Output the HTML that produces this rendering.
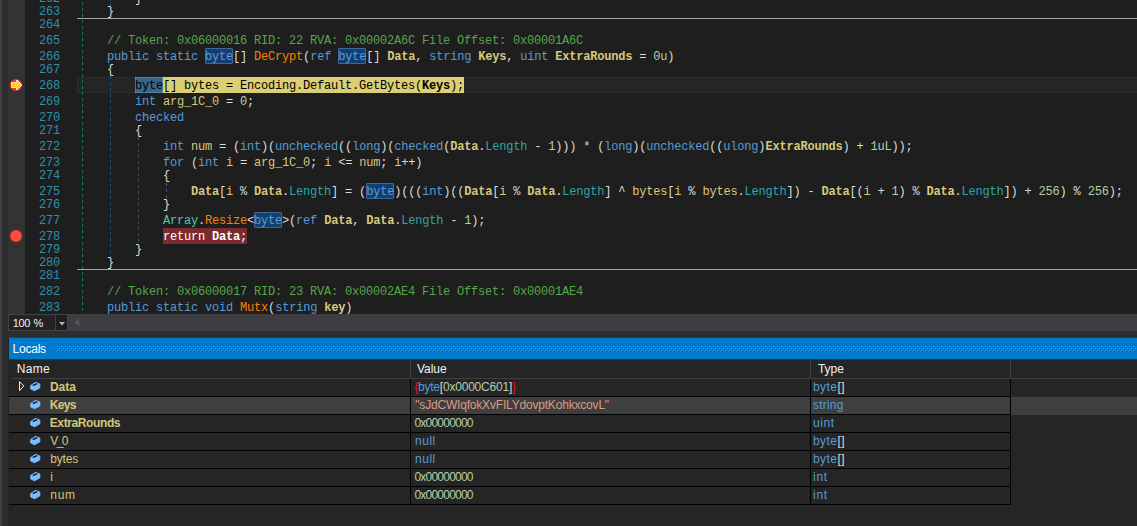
<!DOCTYPE html>
<html lang="en">
<head>
<meta charset="utf-8">
<title>dnSpy - DeCrypt</title>
<style>
html,body{margin:0;padding:0;}
body{width:1137px;height:526px;overflow:hidden;background:#2d2d30;position:relative;font-family:"Liberation Sans",sans-serif;}
#edge{position:absolute;left:0;top:0;width:2px;height:526px;background:#3f3f46;}
#gm{position:absolute;left:8px;top:0;width:17px;height:314px;background:#333333;}
#ed{position:absolute;left:25px;top:0;width:1112px;height:314px;background:#1e1e1e;overflow:hidden;}
#code{position:absolute;left:-25px;top:0;width:1137px;height:314px;font-family:"Liberation Mono", "DejaVu Sans Mono", monospace;font-size:12px;letter-spacing:-0.2px;color:#dcdcdc;white-space:pre;}
.ln{position:absolute;left:32px;width:28px;height:16px;line-height:16px;text-align:right;color:#2b91af;}
.cl{position:absolute;height:16px;line-height:16px;}
.k{color:#569cd6}.c{color:#57a64a}.n{color:#b5cea8}.m{color:#ff8000}.p{color:#d8c87c;font-weight:bold}.l{color:#d8c87c}.t{color:#4ec9b0}.r{color:#2ba7a7}
.cur{color:#000}.cur b{font-weight:bold}.bp{color:#fff}
.bx{position:absolute;height:16px;box-sizing:border-box;}
.bx.hb{background:#133e70;border:1px solid #3f6896;border-radius:1px;}
.bx.hb2{background:#3a6587;border:1px solid #4f7ea8;border-radius:1px;}
.bx.cur{background:#dccf73;}
.bx.bp{background:#7b2a2d;}
.sep{position:absolute;left:77px;right:0;height:1px;background:#a8a8a8;}
.row{position:absolute;left:9px;width:1001px;height:17px;border-bottom:1px solid #000;border-right:1px solid #000;font-size:12px;line-height:17px;color:#dcdcdc;white-space:pre;}
.row .d1,.row .d2{position:absolute;top:0;width:1px;height:17px;background:#000}
.row .d1{left:401px}.row .d2{left:801px}
.row svg.ic{position:absolute;left:20px;top:2px}
.kw{color:#569cd6}.nu{color:#b5cea8}.st{color:#d69d85}.er{color:#e51400}
#curline{position:absolute;left:77px;top:77px;width:1062px;height:14px;border:1px solid #2d2d2d;background:#252525;}
</style>
</head>
<body>
<div id="edge"></div>
<div id="gm"></div>
<div id="ed"><div id="code">
<div class="sep" style="top:18px"></div><div class="sep" style="top:269px"></div><div id="curline"></div><div class="bx hb" style="left:204.5px;top:48px;width:28.5px"></div><div class="bx hb" style="left:337.5px;top:48px;width:28.5px"></div><div class="bx cur" style="left:134.5px;top:77px;width:329.5px"></div><div class="bx hb2" style="left:134.5px;top:77px;width:28.5px"></div><div class="bx hb" style="left:365.5px;top:183px;width:28.5px"></div><div class="bx hb" style="left:253.5px;top:212px;width:28.5px"></div><div class="bx bp" style="left:163px;top:228px;width:84px"></div><svg width="1137" height="314" style="position:absolute;left:0;top:0" shape-rendering="crispEdges"><line x1="82.5" y1="-4" x2="82.5" y2="314" stroke="#1b7762" stroke-dasharray="3 3"/><line x1="110.5" y1="76" x2="110.5" y2="257" stroke="#1b527b" stroke-dasharray="3 3"/><line x1="110.5" y1="-8" x2="110.5" y2="6" stroke="#1b527b" stroke-dasharray="3 3"/><line x1="138.5" y1="137" x2="138.5" y2="244" stroke="#4a4a4a" stroke-dasharray="3 3"/><line x1="166.5" y1="183" x2="166.5" y2="199" stroke="#80399a" stroke-dasharray="3 3"/></svg><div class="ln" style="top:-9px">262</div><div class="cl" style="top:-9px;left:135px">}</div><div class="ln" style="top:4px">263</div><div class="cl" style="top:4px;left:107px">}</div><div class="ln" style="top:17px">264</div><div class="ln" style="top:33px">265</div><div class="cl" style="top:33px;left:107px"><span class="c">// Token: 0x06000016 RID: 22 RVA: 0x00002A6C File Offset: 0x00001A6C</span></div><div class="ln" style="top:49px">266</div><div class="cl" style="top:49px;left:107px"><span class="k">public</span> <span class="k">static</span> <span class="k hb">byte</span>[] <span class="m">DeCrypt</span>(<span class="k">ref</span> <span class="k hb">byte</span>[] <b class="p">Data</b>, <span class="k">string</span> <b class="p">Keys</b>, <span class="k">uint</span> <b class="p">ExtraRounds</b> = <span class="n">0u</span>)</div><div class="ln" style="top:62px">267</div><div class="cl" style="top:62px;left:107px">{</div><div class="ln" style="top:78px">268</div><div class="cl" style="top:78px;left:135px"><span class="cur">byte[] bytes = Encoding.Default.GetBytes(<b>Keys</b>);</span></div><div class="ln" style="top:94px">269</div><div class="cl" style="top:94px;left:135px"><span class="k">int</span> <span class="l">arg_1C_0</span> = <span class="n">0</span>;</div><div class="ln" style="top:110px">270</div><div class="cl" style="top:110px;left:135px"><span class="k">checked</span></div><div class="ln" style="top:123px">271</div><div class="cl" style="top:123px;left:135px">{</div><div class="ln" style="top:139px">272</div><div class="cl" style="top:139px;left:163px"><span class="k">int</span> <span class="l">num</span> = (<span class="k">int</span>)(<span class="k">unchecked</span>((<span class="k">long</span>)(<span class="k">checked</span>(<b class="p">Data</b>.<span class="r">Length</span> - <span class="n">1</span>))) * (<span class="k">long</span>)(<span class="k">unchecked</span>((<span class="k">ulong</span>)<b class="p">ExtraRounds</b>) + <span class="n">1uL</span>));</div><div class="ln" style="top:155px">273</div><div class="cl" style="top:155px;left:163px"><span class="k">for</span> (<span class="k">int</span> <span class="l">i</span> = <span class="l">arg_1C_0</span>; <span class="l">i</span> &lt;= <span class="l">num</span>; <span class="l">i</span>++)</div><div class="ln" style="top:168px">274</div><div class="cl" style="top:168px;left:163px">{</div><div class="ln" style="top:184px">275</div><div class="cl" style="top:184px;left:191px"><b class="p">Data</b>[<span class="l">i</span> % <b class="p">Data</b>.<span class="r">Length</span>] = (<span class="k hb">byte</span>)(((<span class="k">int</span>)((<b class="p">Data</b>[<span class="l">i</span> % <b class="p">Data</b>.<span class="r">Length</span>] ^ <span class="l">bytes</span>[<span class="l">i</span> % <span class="l">bytes</span>.<span class="r">Length</span>]) - <b class="p">Data</b>[(<span class="l">i</span> + <span class="n">1</span>) % <b class="p">Data</b>.<span class="r">Length</span>]) + <span class="n">256</span>) % <span class="n">256</span>);</div><div class="ln" style="top:197px">276</div><div class="cl" style="top:197px;left:163px">}</div><div class="ln" style="top:213px">277</div><div class="cl" style="top:213px;left:163px"><span class="t">Array</span>.<span class="m">Resize</span>&lt;<span class="k hb">byte</span>&gt;(<span class="k">ref</span> <b class="p">Data</b>, <b class="p">Data</b>.<span class="r">Length</span> - <span class="n">1</span>);</div><div class="ln" style="top:229px">278</div><div class="cl" style="top:229px;left:163px"><span class="bp">return <b>Data</b>;</span></div><div class="ln" style="top:242px">279</div><div class="cl" style="top:242px;left:135px">}</div><div class="ln" style="top:255px">280</div><div class="cl" style="top:255px;left:107px">}</div><div class="ln" style="top:268px">281</div><div class="ln" style="top:284px">282</div><div class="cl" style="top:284px;left:107px"><span class="c">// Token: 0x06000017 RID: 23 RVA: 0x00002AE4 File Offset: 0x00001AE4</span></div><div class="ln" style="top:300px">283</div><div class="cl" style="top:300px;left:107px"><span class="k">public</span> <span class="k">static</span> <span class="k">void</span> <span class="m">Mutx</span>(<span class="k">string</span> <b class="p">key</b>)</div></div></div>
<svg width="16" height="16" viewBox="0 0 16 16" style="position:absolute;left:8px;top:77px">
<circle cx="8" cy="8" r="6.4" fill="#2a3032"/>
<circle cx="8" cy="8" r="5.9" fill="#f4362c" stroke="#e2241b" stroke-width="0.6"/>
<path d="M3 5H8V3H10V4H11V5H12V6H13V7H14V9H13V10H12V11H11V12H10V13H8V11H3z" fill="#cfe3e3" shape-rendering="crispEdges"/><path d="M4 6H9V4H10V5H11V6H12V7H13V9H12V10H11V11H10V12H9V10H4z" fill="#ffd21c" shape-rendering="crispEdges"/>
</svg>
<svg width="16" height="16" viewBox="0 0 16 16" style="position:absolute;left:8px;top:228px">
<circle cx="8" cy="8" r="6.4" fill="#2a3032"/>
<circle cx="8" cy="8" r="5.9" fill="#fe4c3f" stroke="#e2241b" stroke-width="0.6"/>
</svg>
<div id="hs" style="position:absolute;left:8px;top:314px;width:1129px;height:17px;background:#3e3e42"></div>
<div id="zoom" style="position:absolute;left:8px;top:314px;width:58px;height:15px;border:1px solid #434346;background:#232324;color:#f1f1f1;font-size:12px;line-height:17px;white-space:pre">
<span id="tZoom" style="position:absolute;left:3.70px;top:0;font-size:11px;letter-spacing:-0.35px;word-spacing:0.80px">100 %</span>
<div style="position:absolute;left:46px;top:0;width:1px;height:15px;background:#434346"></div><div style="position:absolute;left:47px;top:0;width:11px;height:15px;background:#1e1e1e"></div>
<svg width="6" height="4" viewBox="0 0 6 4" style="position:absolute;left:50px;top:7px"><path d="M0 0h6L3 3.4z" fill="#b4b4b4"/></svg>
</div>
<svg width="6" height="9" viewBox="0 0 6 9" style="position:absolute;left:74px;top:318px"><path d="M5.3 0.2v8.6L0 4.5z" fill="#555558"/></svg>
<div id="loc" style="position:absolute;left:8px;top:337px;width:1129px;height:189px;background:#252526;border-top:1px solid #38383c;box-sizing:border-box"></div>
<div id="ttl" style="position:absolute;left:9px;top:338px;width:1128px;height:21px;background:#007acc;color:#fff;font-size:12px;line-height:23px;white-space:pre"><span id="tLocals" style="position:absolute;left:3.56px;top:0;letter-spacing:-0.223px;">Locals</span><svg width="1080" height="5" style="position:absolute;left:48px;top:8px"><defs><pattern id="dp" width="4" height="4" patternUnits="userSpaceOnUse"><rect x="0" y="0" width="1" height="1" fill="#59a8de"/><rect x="2" y="2" width="1" height="1" fill="#59a8de"/></pattern></defs><rect width="1082" height="5" fill="url(#dp)"/></svg></div>
<div id="hdr" style="position:absolute;left:9px;top:359px;width:1128px;height:20px;background:#252526;color:#f1f1f1;font-size:12px;line-height:21px;white-space:pre"><div style="position:absolute;left:2px;right:0;top:19px;height:1px;background:#3f3f46"></div><div style="position:absolute;left:0;right:0;top:0;height:1px;background:#39373a"></div><span id="hName" style="position:absolute;left:7.87px;top:0;letter-spacing:0.236px;">Name</span><div style="position:absolute;left:401px;top:0;width:1px;height:19px;background:#3f3f46"></div><span id="hValue" style="position:absolute;left:408.01px;top:0;letter-spacing:-0.061px;">Value</span><div style="position:absolute;left:801px;top:0;width:1px;height:19px;background:#3f3f46"></div><span id="hType" style="position:absolute;left:808.95px;top:0;letter-spacing:-0.007px;">Type</span><div style="position:absolute;left:1001px;top:0;width:1px;height:19px;background:#3f3f46"></div></div>
<div class="row" style="top:379px"><svg width="6" height="11" viewBox="0 0 6 11" style="position:absolute;left:10px;top:2px"><path d="M0.5 0.6L4.8 5.1 0.5 9.6z" fill="none" stroke="#f1f1f1" stroke-width="1"/></svg><svg class="ic" width="12" height="11" viewBox="0 0 12 11"><path d="M1.7 4.5L6.5 1.4 10.8 3V6.9L5.5 9.7 1.7 7.9z" fill="#75beff" stroke="#75beff" stroke-width="1" stroke-linejoin="round"/><path d="M4.3 4.2L7.7 2.85" stroke="#1a1e24" stroke-width="1.5" stroke-linecap="round"/></svg><span id="n0" style="position:absolute;left:40.90px;top:0;letter-spacing:0.039px;color:#d5c579;font-weight:bold;">Data</span><div class="d1"></div><span id="v0" style="position:absolute;left:405.19px;top:0;letter-spacing:-0.211px;"><span class="er">{</span><span class="kw">byte</span>[<span class="nu">0x0000C601</span>]<span class="er">}</span></span><div class="d2"></div><span id="y0" style="position:absolute;left:803.91px;top:0;letter-spacing:0.452px;"><span class="kw">byte</span>[]</span></div>
<div style="position:absolute;left:9px;top:397px;width:1128px;height:18px;background:#3f3f40"></div><div class="row" style="top:397px"><svg class="ic" width="12" height="11" viewBox="0 0 12 11"><path d="M1.7 4.5L6.5 1.4 10.8 3V6.9L5.5 9.7 1.7 7.9z" fill="#75beff" stroke="#75beff" stroke-width="1" stroke-linejoin="round"/><path d="M4.3 4.2L7.7 2.85" stroke="#1a1e24" stroke-width="1.5" stroke-linecap="round"/></svg><span id="n1" style="position:absolute;left:40.68px;top:0;letter-spacing:-0.681px;color:#d5c579;font-weight:bold;">Keys</span><div class="d1"></div><span id="v1" style="position:absolute;left:406.26px;top:0;letter-spacing:-0.188px;"><span class="st">"sJdCWIqfokXvFILYdovptKohkxcovL"</span></span><div class="d2"></div><span id="y1" style="position:absolute;left:804.04px;top:0;letter-spacing:0.188px;"><span class="kw">string</span></span></div>
<div class="row" style="top:415px"><svg class="ic" width="12" height="11" viewBox="0 0 12 11"><path d="M1.7 4.5L6.5 1.4 10.8 3V6.9L5.5 9.7 1.7 7.9z" fill="#75beff" stroke="#75beff" stroke-width="1" stroke-linejoin="round"/><path d="M4.3 4.2L7.7 2.85" stroke="#1a1e24" stroke-width="1.5" stroke-linecap="round"/></svg><span id="n2" style="position:absolute;left:40.76px;top:0;letter-spacing:-0.389px;color:#d5c579;font-weight:bold;">ExtraRounds</span><div class="d1"></div><span id="v2" style="position:absolute;left:405.48px;top:0;letter-spacing:-0.781px;"><span class="nu">0x00000000</span></span><div class="d2"></div><span id="y2" style="position:absolute;left:804.09px;top:0;letter-spacing:0.572px;"><span class="kw">uint</span></span></div>
<div class="row" style="top:433px"><svg class="ic" width="12" height="11" viewBox="0 0 12 11"><path d="M1.7 4.5L6.5 1.4 10.8 3V6.9L5.5 9.7 1.7 7.9z" fill="#75beff" stroke="#75beff" stroke-width="1" stroke-linejoin="round"/><path d="M4.3 4.2L7.7 2.85" stroke="#1a1e24" stroke-width="1.5" stroke-linecap="round"/></svg><span id="n3" style="position:absolute;left:41.37px;top:0;letter-spacing:-1.672px;color:#d5c579;">V_0</span><div class="d1"></div><span id="v3" style="position:absolute;left:406.07px;top:0;letter-spacing:0.490px;"><span class="kw">null</span></span><div class="d2"></div><span id="y3" style="position:absolute;left:803.91px;top:0;letter-spacing:0.452px;"><span class="kw">byte</span>[]</span></div>
<div class="row" style="top:451px"><svg class="ic" width="12" height="11" viewBox="0 0 12 11"><path d="M1.7 4.5L6.5 1.4 10.8 3V6.9L5.5 9.7 1.7 7.9z" fill="#75beff" stroke="#75beff" stroke-width="1" stroke-linejoin="round"/><path d="M4.3 4.2L7.7 2.85" stroke="#1a1e24" stroke-width="1.5" stroke-linecap="round"/></svg><span id="n4" style="position:absolute;left:41.22px;top:0;letter-spacing:-0.148px;color:#d5c579;">bytes</span><div class="d1"></div><span id="v4" style="position:absolute;left:406.07px;top:0;letter-spacing:0.490px;"><span class="kw">null</span></span><div class="d2"></div><span id="y4" style="position:absolute;left:803.91px;top:0;letter-spacing:0.452px;"><span class="kw">byte</span>[]</span></div>
<div class="row" style="top:469px"><svg class="ic" width="12" height="11" viewBox="0 0 12 11"><path d="M1.7 4.5L6.5 1.4 10.8 3V6.9L5.5 9.7 1.7 7.9z" fill="#75beff" stroke="#75beff" stroke-width="1" stroke-linejoin="round"/><path d="M4.3 4.2L7.7 2.85" stroke="#1a1e24" stroke-width="1.5" stroke-linecap="round"/></svg><span id="n5" style="position:absolute;left:41.35px;top:0;letter-spacing:0.000px;color:#d5c579;">i</span><div class="d1"></div><span id="v5" style="position:absolute;left:405.48px;top:0;letter-spacing:-0.781px;"><span class="nu">0x00000000</span></span><div class="d2"></div><span id="y5" style="position:absolute;left:803.98px;top:0;letter-spacing:0.751px;"><span class="kw">int</span></span></div>
<div class="row" style="top:487px"><svg class="ic" width="12" height="11" viewBox="0 0 12 11"><path d="M1.7 4.5L6.5 1.4 10.8 3V6.9L5.5 9.7 1.7 7.9z" fill="#75beff" stroke="#75beff" stroke-width="1" stroke-linejoin="round"/><path d="M4.3 4.2L7.7 2.85" stroke="#1a1e24" stroke-width="1.5" stroke-linecap="round"/></svg><span id="n6" style="position:absolute;left:41.26px;top:0;letter-spacing:0.712px;color:#d5c579;">num</span><div class="d1"></div><span id="v6" style="position:absolute;left:405.48px;top:0;letter-spacing:-0.781px;"><span class="nu">0x00000000</span></span><div class="d2"></div><span id="y6" style="position:absolute;left:803.98px;top:0;letter-spacing:0.751px;"><span class="kw">int</span></span></div>
</body>
</html>
